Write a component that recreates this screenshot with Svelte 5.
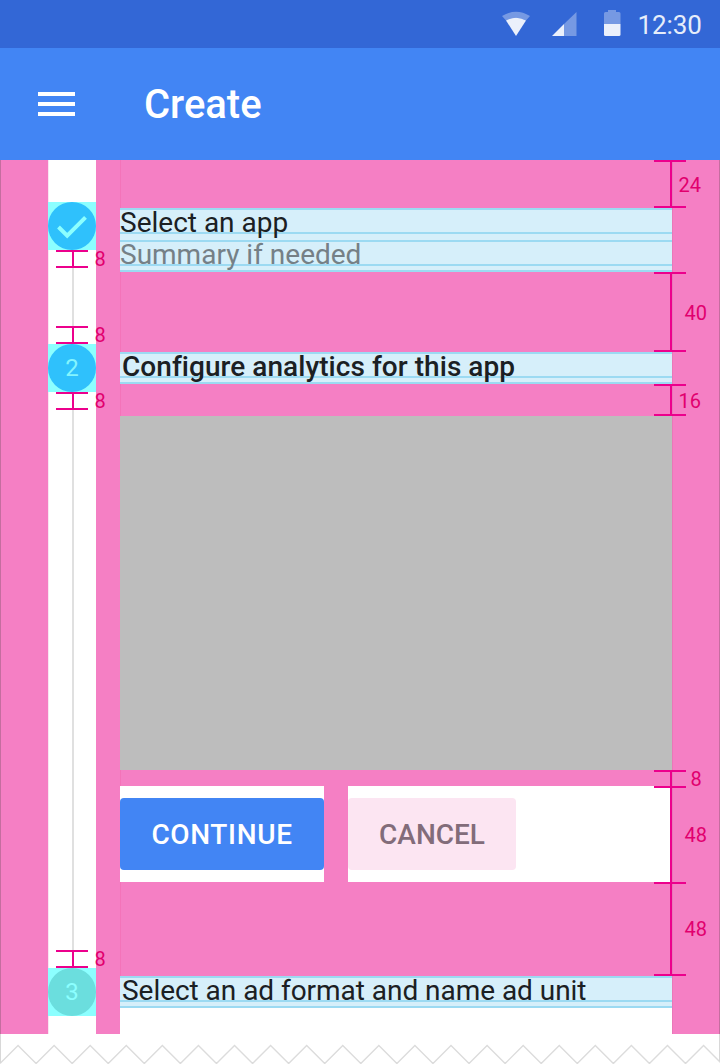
<script>
  const right = [
    { top: 160, bottom: 208, value: 24, x: 678.5, base: 192 },
    { top: 272, bottom: 352, value: 40, x: 684.5, base: 320 },
    { top: 384, bottom: 416, value: 16, x: 678.5, base: 408 },
    { top: 770, bottom: 788, value: 8, x: 690.5, base: 786 },
    { top: 786, bottom: 884, value: 48, x: 684.5, base: 842 },
    { top: 882, bottom: 976, value: 48, x: 684.5, base: 936 }
  ];
  const left = [
    { top: 250, bottom: 268, base: 266 },
    { top: 326, bottom: 344, base: 342 },
    { top: 392, bottom: 410, base: 408 },
    { top: 950, bottom: 968, base: 966 }
  ];
  const tear = Array.from({ length: 41 }, (_, i) => `${i * 18.04},${i % 2 ? 11.5 : 29.5}`).join(' ');
</script>

<div class="screen">
  <div class="status">
    <svg class="signals" width="124" height="48" viewBox="0 0 124 48" fill="#fff">
      <path opacity=".33" d="M2 16Q16 7.500 30 16L26 20.500Q16 15 6 20.500Z" />
      <path opacity=".9" d="M6 20.500Q16 15 26 20.500L16 36Z" />
      <path opacity=".33" d="M76.500 12V36H64V24Z" />
      <path opacity=".9" d="M64 24V36H52Z" />
      <path opacity=".33" d="M104 24V13.500Q104 12 105.500 12H108V10H116V12H119Q120.500 12 120.500 13.500V24Z" />
      <path opacity=".9" d="M104 24H120.500V34.500Q120.500 36 119 36H105.500Q104 36 104 34.500Z" />
    </svg>
    <span class="clock">12:30</span>
  </div>
  <header>
    <div class="menu"><i></i><i></i><i></i></div>
    <h1>Create</h1>
  </header>

  <main>
    <div class="margin"></div>
    <div class="rail">
      <div class="step first">
        <div class="dot"><svg width="48" height="48" viewBox="0 0 48 48"><path d="M10.500 25L19.200 33.600L37.500 15.400" fill="none" stroke="#8cffff" stroke-width="4" /></svg></div>
      </div>
      <div class="line short"></div>
      <div class="step"><div class="dot">2</div></div>
      <div class="line"></div>
      <div class="step"><div class="dot idle">3</div></div>
    </div>
    <div class="gutter"></div>
    <div class="content">
      <div class="space s24"></div>
      <div class="text app">Select an app</div>
      <div class="text summary">Summary if needed</div>
      <div class="space s40"></div>
      <div class="text strong">Configure analytics for this app</div>
      <div class="space s16"></div>
      <div class="panel"></div>
      <div class="space s8"></div>
      <div class="actions">
        <button class="continue">CONTINUE</button>
        <div class="between"></div>
        <button class="cancel">CANCEL</button>
      </div>
      <div class="space s47"></div>
      <div class="text last">Select an ad format and name ad unit</div>
    </div>
    <div class="margin end"></div>
  </main>

  <svg class="tear" width="720" height="30" viewBox="0 0 720 30">
    <polyline points={tear} fill="none" stroke="#dcdcdc" stroke-width="1.400" />
    <path d="M.5 0V29M719.500 0V27" stroke="#d8d8d8" />
  </svg>

  <svg class="measures" width="720" height="1064" viewBox="0 0 720 1064">
    {#each right as m}
      <path d="M654 {m.top + 1}H686M654 {m.bottom - 1}H686M671 {m.top}V{m.bottom}" />
      <text x={m.x} y={m.base}>{m.value}</text>
    {/each}
    {#each left as m}
      <path d="M56 {m.top + 1}H88M56 {m.bottom - 1}H88M73 {m.top}V{m.bottom}" />
      <text x="94.500" y={m.base}>8</text>
    {/each}
  </svg>
</div>

<style>
  :global(body) { margin: 0; background: #fff; }
  .screen { position: relative; width: 720px; height: 1064px; overflow: hidden; font-family: Roboto, sans-serif; background: #fff; }
  .status { height: 48px; display: flex; align-items: center; padding-left: 500px; background: #3367d6; }
  .signals { flex: none; }
  .clock { padding-top: 2px; margin-left: 13.500px; font-size: 26px; line-height: 46px; letter-spacing: -.1px; color: #e6edfa; }
  header { height: 112px; display: flex; align-items: center; background: #4285f4; color: #fff; }
  .menu { display: grid; gap: 6px; width: 36.500px; margin-left: 38px; }
  .menu i { height: 4px; background: #fff; }
  h1 { margin: 2px 0 0 69.500px; font-size: 40px; line-height: 48px; font-weight: 500; }
  main { height: 874px; display: grid; grid-template-columns: 48px 48px 24px 552px 48px; }
  .margin, .gutter, .space, .between { background: #f57fc4; }
  .margin { box-shadow: inset 1px 0 #c56d9f; }
  .margin.end { box-shadow: inset 1px 0 #ea77b8, inset -1px 0 #c56d9f; }
  .space { box-shadow: inset 1px 0 #f473b9; }
  .rail { display: flex; flex-direction: column; box-shadow: inset 1px 0 #f8e6f1; }
  .step { flex: none; height: 48px; background: #8cffff; }
  .first { margin-top: 42px; }
  .dot { height: 48px; border-radius: 50%; background: #2fc1fc; color: #84f5fe; font-size: 24px; line-height: 48px; text-align: center; }
  .dot svg { display: block; }
  .dot.idle { background: #6bdede; color: #8cffff; }
  .line { flex: none; width: 2px; height: 576px; margin-left: 24px; background: #e0e0e0; }
  .line.short { height: 94px; }
  .content { display: flex; flex-direction: column; }
  .content > div { flex: none; }
  .s24 { height: 48px; }
  .s40 { height: 80px; }
  .s16 { height: 32px; }
  .s8 { height: 16px; }
  .s47 { height: 94px; }
  .text { height: 32px; box-sizing: border-box; font-size: 28px; line-height: 29px; white-space: nowrap; color: #1b2023; background: linear-gradient(#9cdaf2 2px, #d6effa 2px 24px, #9cdaf2 24px 26px, #d6effa 26px 30px, #9cdaf2 30px); }
  .app { background: linear-gradient(#9cdaf2 2px, #d6effa 2px 24px, #9cdaf2 24px 26px, #d6effa 26px); }
  .summary { color: #758086; }
  .strong { padding-left: 2px; font-weight: 500; letter-spacing: .05px; }
  .last { padding-left: 2px; letter-spacing: -.04px; }
  .panel { height: 354px; background: #bdbdbd; }
  .actions { height: 96px; display: flex; align-items: center; }
  .between { width: 24px; height: 96px; }
  button { height: 72px; padding: 2px 0 0; border: 0; border-radius: 4px; font: 500 28px/70px Roboto, sans-serif; }
  .continue { width: 204px; color: #fff; background: #4285f4; letter-spacing: .65px; }
  .cancel { width: 168px; color: #826c7a; background: #fce5f2; }
  .tear { display: block; }
  .measures { position: absolute; left: 0; top: 0; }
  .measures path { fill: none; stroke: #ec008c; stroke-width: 2; }
  .measures text { font-size: 20px; fill: #e1006e; }
</style>
